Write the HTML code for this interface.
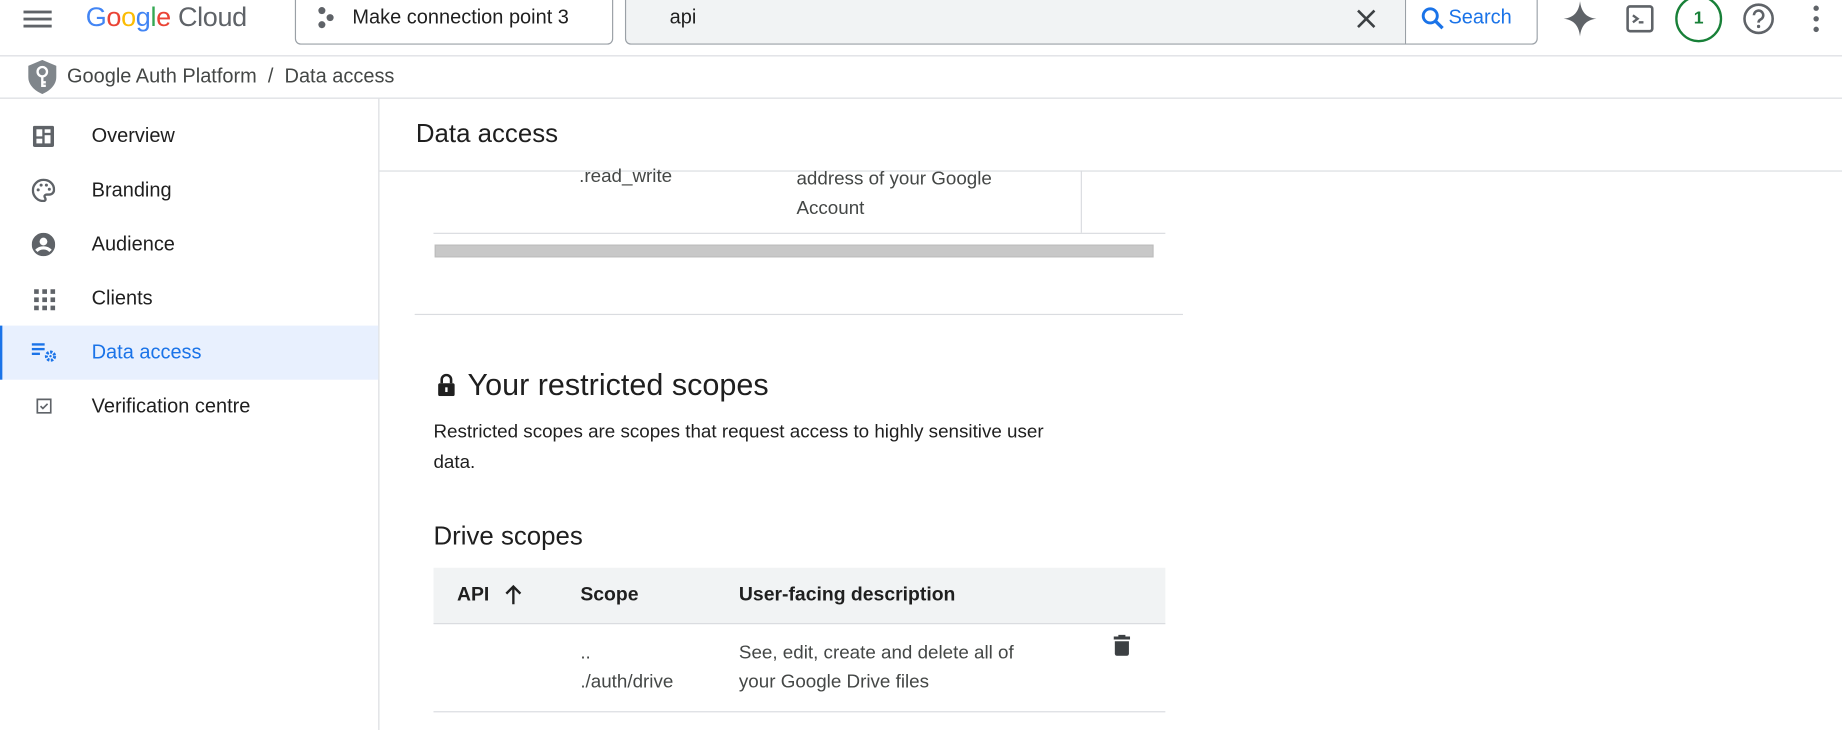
<!DOCTYPE html>
<html><head><meta charset="utf-8"><style>
*{box-sizing:border-box;margin:0;padding:0}
html,body{width:1842px;height:730px;overflow:hidden;background:#fff}
#w{position:absolute;left:0;top:0;width:1568px;height:621px;transform:scale(1.17474,1.1755);transform-origin:0 0;font-family:"Liberation Sans",Arial,sans-serif;color:#1f1f1f}
.a{position:absolute;white-space:nowrap}
</style></head><body><div id="w">
<div class="a" style="left:0;top:47px;width:1568px;height:1px;background:#dadce0"></div>
<svg class="a" style="left:19px;top:6px" width="26" height="20" viewBox="0 0 26 20"><rect x="1" y="3" width="24" height="2.4" fill="#5f6368"/><rect x="1" y="9" width="24" height="2.4" fill="#5f6368"/><rect x="1" y="15" width="24" height="2.4" fill="#5f6368"/></svg>
<div class="a" style="left:73px;top:1px;font-size:23px;letter-spacing:-0.3px"><span style="color:#4285f4">G</span><span style="color:#ea4335">o</span><span style="color:#fbbc04">o</span><span style="color:#4285f4">g</span><span style="color:#34a853">l</span><span style="color:#ea4335">e</span><span style="color:#5f6368"> Cloud</span></div>
<div class="a" style="left:251px;top:-4px;width:271px;height:42px;border:1px solid #9aa0a6;border-radius:0 0 5px 5px"></div>
<svg class="a" style="left:268px;top:5px" width="20" height="20" viewBox="0 0 20 20"><circle cx="6" cy="4" r="3" fill="#5f6368"/><circle cx="13" cy="10" r="3" fill="#5f6368"/><circle cx="6" cy="16" r="3" fill="#5f6368"/></svg>
<div class="a" style="left:300px;top:5px;font-size:17px;color:#1f1f1f">Make connection point 3</div>
<div class="a" style="left:532px;top:-4px;width:777px;height:42px;border:1px solid #9aa0a6;border-radius:0 0 5px 5px;background:#f1f3f4"></div>
<div class="a" style="left:1196px;top:-3px;width:112px;height:40px;background:#fff;border-left:1px solid #9aa0a6;border-radius:0 0 5px 0"></div>
<div class="a" style="left:570px;top:5px;font-size:17px">api</div>
<svg class="a" style="left:1154px;top:7px" width="18" height="18" viewBox="0 0 18 18"><path d="M2 2L16 16M16 2L2 16" stroke="#3c4043" stroke-width="2.2"/></svg>
<svg class="a" style="left:1209px;top:5px" width="22" height="22" viewBox="0 0 22 22"><circle cx="8.5" cy="8.5" r="6" stroke="#1a73e8" stroke-width="2.5" fill="none"/><path d="M13 13L19 19" stroke="#1a73e8" stroke-width="2.8"/></svg>
<div class="a" style="left:1233px;top:5px;font-size:17px;color:#1a73e8">Search</div>
<svg class="a" style="left:1331px;top:1px" width="28" height="30" viewBox="0 0 28 30"><path d="M14 0C15 9 19 14 28 15C19 16 15 21 14 30C13 21 9 16 0 15C9 14 13 9 14 0Z" fill="#5f6368"/></svg>
<svg class="a" style="left:1384px;top:4px" width="24" height="24" viewBox="0 0 24 24"><rect x="1.5" y="1.5" width="21" height="21" rx="2" fill="none" stroke="#5f6368" stroke-width="2.2"/><path d="M6 9l4 3-4 3" stroke="#5f6368" stroke-width="2" fill="none"/><rect x="11" y="14" width="4" height="2" fill="#5f6368"/></svg>
<div class="a" style="left:1426px;top:-4px;width:40px;height:40px;border:2px solid #188038;border-radius:50%;font-size:15px;color:#188038;text-align:center;line-height:36px;font-weight:bold">1</div>
<svg class="a" style="left:1483px;top:2px" width="28" height="28" viewBox="0 0 28 28"><circle cx="14" cy="14" r="12" fill="none" stroke="#5f6368" stroke-width="2.2"/><path d="M10 11a4 4 0 1 1 5.5 3.7c-1 .5-1.5 1.2-1.5 2.5" fill="none" stroke="#5f6368" stroke-width="2.2"/><circle cx="14" cy="20.5" r="1.4" fill="#5f6368"/></svg>
<svg class="a" style="left:1542px;top:4px" width="8" height="24" viewBox="0 0 8 24"><circle cx="4" cy="3" r="2.3" fill="#5f6368"/><circle cx="4" cy="12" r="2.3" fill="#5f6368"/><circle cx="4" cy="21" r="2.3" fill="#5f6368"/></svg>
<div class="a" style="left:0;top:83px;width:1568px;height:1px;background:#dadce0"></div>
<svg class="a" style="left:24px;top:51px" width="24" height="29" viewBox="0 0 24 29"><path d="M12 0L24 5V14C24 21 19 26 12 29C5 26 0 21 0 14V5Z" fill="#80868b"/><circle cx="12" cy="10" r="4" fill="none" stroke="#fff" stroke-width="2"/><path d="M12 14V23M12 19H15M12 22H15" stroke="#fff" stroke-width="2"/></svg>
<div class="a" style="left:57px;top:55px;font-size:17px;color:#444746">Google Auth Platform&nbsp;&nbsp;/&nbsp;&nbsp;Data access</div>
<div class="a" style="left:322px;top:84px;width:1px;height:537px;background:#dadce0"></div>
<div class="a" style="left:0;top:277px;width:322px;height:46px;background:#e8f0fe;border-left:2px solid #1a73e8"></div>
<svg class="a" style="left:28px;top:107px" width="18" height="18" viewBox="0 0 18 18"><rect x="0" y="0" width="18" height="18" rx="1.5" fill="#5f6368"/><rect x="3" y="3" width="5" height="6" fill="#fff"/><rect x="10" y="3" width="5" height="3" fill="#fff"/><rect x="10" y="8" width="5" height="7" fill="#fff"/><rect x="3" y="11" width="5" height="4" fill="#fff"/></svg>
<svg class="a" style="left:27px;top:152px" width="20" height="20" viewBox="0 0 20 20"><path d="M10 1a9 9 0 0 0 0 18c1.2 0 1.8-.8 1.8-1.6 0-1-.9-1.3-.9-2.3 0-.9.8-1.6 1.8-1.6H15a4 4 0 0 0 4-4C19 4.5 15 1 10 1Z" fill="none" stroke="#5f6368" stroke-width="2"/><circle cx="5.5" cy="9.5" r="1.3" fill="#5f6368"/><circle cx="8" cy="5.5" r="1.3" fill="#5f6368"/><circle cx="12.5" cy="5.5" r="1.3" fill="#5f6368"/><circle cx="15" cy="9" r="1.3" fill="#5f6368"/></svg>
<svg class="a" style="left:27px;top:198px" width="20" height="20" viewBox="0 0 20 20"><circle cx="10" cy="10" r="10" fill="#5f6368"/><circle cx="10" cy="7.5" r="3.3" fill="#fff"/><path d="M4 15.5c3-3.5 9-3.5 12 0" stroke="#fff" stroke-width="2.8" fill="none"/></svg>
<svg class="a" style="left:29px;top:246px" width="18" height="18" viewBox="0 0 18 18" fill="#5f6368"><rect x="0" y="0" width="4" height="4"/><rect x="7" y="0" width="4" height="4"/><rect x="14" y="0" width="4" height="4"/><rect x="0" y="7" width="4" height="4"/><rect x="7" y="7" width="4" height="4"/><rect x="14" y="7" width="4" height="4"/><rect x="0" y="14" width="4" height="4"/><rect x="7" y="14" width="4" height="4"/><rect x="14" y="14" width="4" height="4"/></svg>
<svg class="a" style="left:27px;top:291px" width="22" height="18" viewBox="0 0 22 18"><rect x="0" y="1" width="11" height="2" fill="#1a73e8"/><rect x="0" y="5" width="11" height="2" fill="#1a73e8"/><rect x="0" y="9" width="7" height="2" fill="#1a73e8"/><circle cx="16" cy="12" r="3.5" fill="none" stroke="#1a73e8" stroke-width="2.6" stroke-dasharray="2 1.2"/><circle cx="16" cy="12" r="1" fill="#1a73e8"/></svg>
<svg class="a" style="left:31px;top:339px" width="13" height="13" viewBox="0 0 13 13"><rect x="0.75" y="0.75" width="11.5" height="11.5" fill="none" stroke="#5f6368" stroke-width="1.5"/><path d="M3.5 6.5l2 2 4-4" stroke="#5f6368" stroke-width="1.4" fill="none"/></svg>
<div class="a" style="left:78px;top:106px;font-size:17px;line-height:20px">Overview</div>
<div class="a" style="left:78px;top:152px;font-size:17px;line-height:20px">Branding</div>
<div class="a" style="left:78px;top:198px;font-size:17px;line-height:20px">Audience</div>
<div class="a" style="left:78px;top:244px;font-size:17px;line-height:20px">Clients</div>
<div class="a" style="left:78px;top:290px;font-size:17px;line-height:20px;color:#1a73e8">Data access</div>
<div class="a" style="left:78px;top:336px;font-size:17px;line-height:20px">Verification centre</div>
<div class="a" style="left:354px;top:101px;font-size:22px;line-height:26px">Data access</div>
<div class="a" style="left:323px;top:145px;width:1245px;height:1px;background:#dadce0"></div>
<div class="a" style="left:493px;top:141px;font-size:16px;line-height:20px;color:#444746">.read_write</div>
<div class="a" style="left:678px;top:141px;font-size:16px;line-height:24.5px;color:#444746">address of your Google<br>Account</div>
<div class="a" style="left:920px;top:145px;width:1px;height:53px;background:#dadce0"></div>
<div class="a" style="left:369px;top:198px;width:623px;height:1px;background:#dadce0"></div>
<div class="a" style="left:370px;top:208px;width:612px;height:11px;background:#c8c8c8;border:1px solid #bdbdbd"></div>
<div class="a" style="left:353px;top:267px;width:654px;height:1px;background:#dadce0"></div>
<svg class="a" style="left:372px;top:318px" width="16" height="19" viewBox="0 0 16 19"><path d="M4 8V5a4 4 0 0 1 8 0v3" fill="none" stroke="#1f1f1f" stroke-width="2.2"/><rect x="1" y="8" width="14" height="11" rx="1.5" fill="#1f1f1f"/><rect x="7" y="11.5" width="2" height="4" fill="#fff"/></svg>
<div class="a" style="left:398px;top:311px;font-size:26px;line-height:32px">Your restricted scopes</div>
<div class="a" style="left:369px;top:355px;font-size:16px;line-height:26px;color:#1f1f1f">Restricted scopes are scopes that request access to highly sensitive user<br>data.</div>
<div class="a" style="left:369px;top:443px;font-size:22px;line-height:26px">Drive scopes</div>
<div class="a" style="left:369px;top:483px;width:623px;height:48px;background:#f1f3f4;border-bottom:1px solid #dadce0"></div>
<div class="a" style="left:389px;top:496px;font-size:16.5px;font-weight:bold;line-height:20px;color:#1f1f1f">API</div>
<svg class="a" style="left:429px;top:497px" width="16" height="18" viewBox="0 0 16 18"><path d="M8 17V2M2 8l6-6 6 6" fill="none" stroke="#1f1f1f" stroke-width="2"/></svg>
<div class="a" style="left:494px;top:496px;font-size:16.5px;font-weight:bold;line-height:20px">Scope</div>
<div class="a" style="left:629px;top:496px;font-size:16.5px;font-weight:bold;line-height:20px">User-facing description</div>
<div class="a" style="left:494px;top:543px;font-size:16px;line-height:25px;color:#444746">..<br>./auth/drive</div>
<div class="a" style="left:629px;top:543px;font-size:16px;line-height:25px;color:#444746">See, edit, create and delete all of<br>your Google Drive files</div>
<svg class="a" style="left:948px;top:540px" width="14" height="18" viewBox="0 0 14 18"><path d="M4 0h6v1.5h4V4H0V1.5h4Z" fill="#3c4043"/><path d="M1 5.5h12V16a2 2 0 0 1-2 2H3a2 2 0 0 1-2-2Z" fill="#3c4043"/></svg>
<div class="a" style="left:369px;top:605px;width:623px;height:1px;background:#dadce0"></div>
</div></body></html>
